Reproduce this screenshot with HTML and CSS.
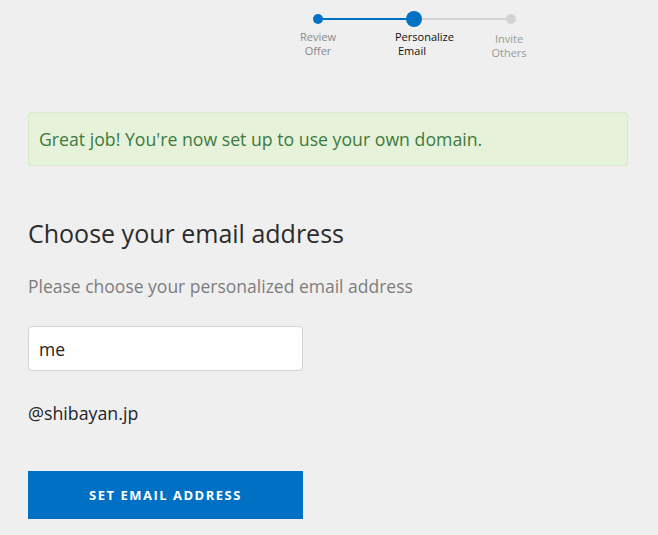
FILE: index.html
```html
<!DOCTYPE html>
<html>
<head>
<meta charset="utf-8">
<link rel="stylesheet" href="styles.css">
</head>
<body>
<div class="page">
  <div class="stepper">
    <div class="track">
      <span class="seg seg-done"></span>
      <span class="seg seg-todo"></span>
      <span class="dot dot-done d1"></span>
      <span class="dot dot-current d2"></span>
      <span class="dot dot-todo d3"></span>
    </div>
    <div class="labels">
      <span class="label label-done">Review<br>Offer</span>
      <span class="label label-current">Personalize<br><span class="indent">Email</span></span>
      <span class="label label-todo">Invite<br>Others</span>
    </div>
  </div>

  <div class="alert">Great job! You're now set up to use your own domain.</div>

  <h1 class="title">Choose your email address</h1>
  <p class="subtitle">Please choose your personalized email address</p>

  <input class="field" type="text" value="me">
  <p class="domain">@shibayan.jp</p>

  <button class="primary">SET EMAIL ADDRESS</button>
</div>
</body>
</html>
```
FILE: styles.css
```css
html, body {
  margin: 0;
  padding: 0;
  background: #efefef;
}
body {
  font-family: "Open Sans", "Noto Sans", sans-serif;
  color: #252525;
}
.page {
  padding: 0 30px 0 28px;
}
.stepper {
  margin-left: 264px;
  width: 246px;
  padding-top: 11px;
}
.track {
  position: relative;
  height: 16px;
}
.seg {
  position: absolute;
  top: 7px;
  height: 2px;
}
.seg-done {
  left: 26px;
  width: 96px;
  background: #0072c6;
}
.seg-todo {
  left: 122px;
  width: 97px;
  background: #d4d4d4;
}
.dot {
  position: absolute;
  border-radius: 50%;
}
.d1 { left: 21px; top: 3px; width: 10px; height: 10px; background: #0072c6; }
.d2 { left: 114px; top: 0; width: 16px; height: 16px; background: #0072c6; }
.d3 { left: 214px; top: 3px; width: 10px; height: 10px; background: #d4d4d4; }
.labels {
  display: flex;
  font-size: 11px;
  line-height: 14px;
  margin-top: 3px;
}
.label {
  display: block;
  text-align: center;
}
.label-done { width: 50px; color: #888; margin-left: 1px; }
.label-current { width: 70px; color: #111; margin-left: 52px; text-align: left; }
.indent { padding-left: 3px; }
.label-todo { width: 50px; color: #999; margin-left: 19px; margin-top: 2px; }

.alert {
  margin-top: 52px;
  box-sizing: border-box;
  border: 1px solid #d8ebc8;
  background: #e7f2da;
  border-radius: 3px;
  color: #3c7a3d;
  font-size: 17.7px;
  padding: 0 10px;
  display: flex;
  align-items: center;
  height: 54px;
}
.title {
  margin: 50px 0 0;
  font-weight: 400;
  font-size: 25px;
  line-height: 34px;
  color: #2b2b2b;
}
.subtitle {
  margin: 24px 0 0;
  font-size: 17.5px;
  line-height: 24px;
  color: #7d7d7d;
}
.field {
  display: block;
  margin-top: 28px;
  width: 275px;
  height: 45px;
  box-sizing: border-box;
  border: 1px solid #d2d2d2;
  border-radius: 4px;
  background: #fff;
  padding: 0 10px;
  font-family: inherit;
  font-size: 17.5px;
  color: #222;
  outline: none;
}
.domain {
  margin: 30px 0 0;
  font-size: 17.8px;
  line-height: 24px;
  color: #252525;
}
.primary {
  display: block;
  margin-top: 46px;
  width: 275px;
  height: 48px;
  border: none;
  background: #0070c4;
  color: #fff;
  font-family: inherit;
  font-weight: 700;
  font-size: 13px;
  letter-spacing: 1.5px;
}
```
